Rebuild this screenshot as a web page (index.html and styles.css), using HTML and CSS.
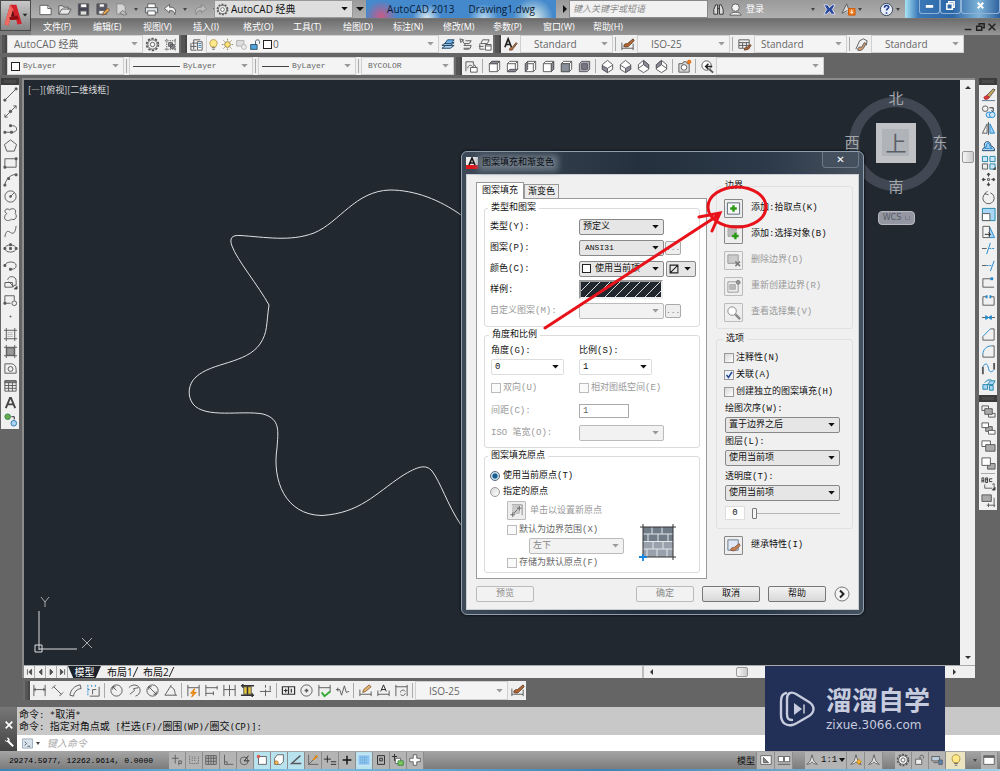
FILE: index.html
```html
<!DOCTYPE html>
<html lang="zh-CN">
<head>
<meta charset="utf-8">
<title>AutoCAD 2013 Drawing1.dwg</title>
<link rel="stylesheet" href="styles.css">
</head>
<body>
<svg class="defs" aria-hidden="true">
<symbol id="new" viewBox="0 0 16 16"><path d="M2 3.500h8.500l3.500 3.500v6.500H2z" fill="#fff"/><path d="M10.500 3.500V7H14"/></symbol>
<symbol id="open" viewBox="0 0 16 16"><path d="M2 13V4h4l1 1.500h5V8M2 13l3-5.500h10L12 13z" fill="#e8e8e8"/></symbol>
<symbol id="save" viewBox="0 0 16 16"><path d="M2.500 2h11v12h-11z" fill="#445"/><path d="M5 2h6.500v4H5z" fill="#fff"/><path d="M4.500 9.500h7V14h-7z" fill="#ddd"/></symbol>
<symbol id="saveas" viewBox="0 0 16 16"><path d="M2 2h10.500v11H2z" fill="#556"/><path d="M4.500 2h5.500v3.500H4.500z" fill="#fff"/><path d="M4 9h6v4H4z" fill="#eee"/><path d="M8 14l1-3 4.500-4.500 2 2L11 13z" fill="#e2aa4c" stroke="#754"/></symbol>
<symbol id="plot" viewBox="0 0 16 16"><path d="M3 2h6l3 3v8H3z" fill="#d5d5d5" stroke="#888"/><path d="M6 12l3-3 5 4-3 1z" fill="#bbb" stroke="#777"/></symbol>
<symbol id="print" viewBox="0 0 16 16"><path d="M4 6V2h8v4" fill="#fff"/><path d="M1.500 6h13v5.500h-13z" fill="#dfe3e8"/><path d="M4 9.500h8V14H4z" fill="#fff"/></symbol>
<symbol id="undo" viewBox="0 0 16 16"><path d="M7 2.500L1.500 7 7 11.500V9c4 0 5 1 5.500 4.500C15 8 12 5.500 7 5.500z" fill="#f4f4f4"/></symbol>
<symbol id="redo" viewBox="0 0 16 16"><path d="M9 2.500L14.500 7 9 11.500V9c-4 0-5 1-5.500 4.500C1 8 4 5.500 9 5.500z" fill="#bbb" stroke="#888"/></symbol>
<symbol id="gear" viewBox="0 0 16 16"><circle cx="8" cy="8" r="6.300" stroke-width="1.800" stroke-dasharray="2.500 1.450"/><circle cx="8" cy="8" r="5" fill="#eee"/><circle cx="8" cy="8" r="2.300" fill="#fff"/></symbol>
<symbol id="wsave" viewBox="0 0 16 16"><path d="M2 4h12M2 13h12M4 2v13M13 2v13" stroke-dasharray="1.500 1"/><path d="M6 6h4v4H6zM8 8h4v4H8z" fill="#99a"/></symbol>
<symbol id="layers" viewBox="0 0 16 16"><path d="M5 3h7M5 3v10M5 6.500h6M3 6.500h2M2 10h6M2 6.500V14h6" /><path d="M9 5h5v9H9z" fill="#fff"/><path d="M10 7h3M10 9h3M10 11h3" stroke="#37a"/></symbol>
<symbol id="lay1" viewBox="0 0 16 16"><path d="M1 12l4-3h9l-4 3zM1 9l4-3h9l-4 3z" fill="#a9cdec" stroke="#246"/><path d="M4 7l3-4h7l-3 4z" fill="#6db2e8" stroke="#246"/></symbol>
<symbol id="lay2" viewBox="0 0 16 16"><path d="M7 4h6l-2 3H6M5 9h8l-1 3H5M5 13h6"/><path d="M1 2l4 1-3 3zM3 3l4 6"/></symbol>
<symbol id="lay3" viewBox="0 0 16 16"><path d="M4 7l2-4h7l-2 4zM3 7v6h5M2 10h5"/><path d="M9 8h6v6H9z" fill="#fff"/><path d="M9 9.500h6"/></symbol>
<symbol id="bulb" viewBox="0 0 16 16"><path d="M5.500 11C2 7 3.500 2 8 2s6 5 2.500 9z" fill="#ffe98a" stroke="#a98b31"/><path d="M6 12h4M6.500 14h3"/></symbol>
<symbol id="sun" viewBox="0 0 16 16"><circle cx="8" cy="8" r="3.500" fill="#ffe57a" stroke="#87733b"/><path d="M8 1v2M8 13v2M1 8h2M13 8h2M3 3l1.500 1.500M11.500 11.500L13 13M13 3l-1.500 1.500M3 13l1.500-1.500" stroke="#87733b"/></symbol>
<symbol id="vpf" viewBox="0 0 16 16"><path d="M2 3h9v7H2z" fill="#ddd" stroke="#aaa"/><circle cx="11" cy="11" r="3" fill="#eee" stroke="#aaa"/></symbol>
<symbol id="lock" viewBox="0 0 16 16"><path d="M2 8h8v6H2z" fill="#4da3df" stroke="#245"/><path d="M8 8V4.500c0-3 5-3 5 0V7" stroke="#245"/></symbol>
<symbol id="tstyle" viewBox="0 0 16 16"><path d="M2 11L5.500 2 9 11M3 8h5" stroke="#222" stroke-width="1.800"/><path d="M7 14c0-3 2-3 3-3l4-5 1 1-4 5c0 2-2 2-4 2z" fill="#c0763d" stroke="#643"/></symbol>
<symbol id="dstyle" viewBox="0 0 16 16"><path d="M2 6v8M14 7v7M2 12h12"/><path d="M4 10c0-3 3-3 4-3l6-5 1 2-5 5c-1 2-4 2-6 1z" fill="#b5652f" stroke="#643"/></symbol>
<symbol id="tbstyle" viewBox="0 0 16 16"><path d="M2 3h11v9H2zM2 6h11M2 9h11M6 6v6M10 6v6"/><path d="M8 14c0-3 2-3 3-3l3-3 1 1-3 4z" fill="#b5652f" stroke="#643"/></symbol>
<symbol id="mlstyle" viewBox="0 0 16 16"><path d="M2 13L6 4l4-2 4 2-1 5"/><path d="M4 14c0-3 2-4 4-3l3-5 2 1-3 5c-1 2-4 3-6 2z" fill="#d89a6a"/></symbol>
<symbol id="vmgr" viewBox="0 0 16 16"><path d="M2 13V3h8v3M4 10c0-4 4-4 5-2"/><path d="M7 9h7v5H7z" fill="#fff"/><path d="M9 9l2-3 2 3"/></symbol>
<symbol id="cube" viewBox="0 0 16 16"><path d="M2.500 5h8.500v8.500H2.500zM2.500 5L5 2.500h8.500L11 5M13.500 2.500V11L11 13.500" fill="#fff"/></symbol>
<symbol id="cubeT" viewBox="0 0 16 16"><use href="#cube"/><path d="M2.500 5L5 2.500h8.500L11 5z" fill="#889"/></symbol>
<symbol id="cubeB" viewBox="0 0 16 16"><use href="#cube"/><path d="M2.500 13.500L5 11h8.500L11 13.500z" fill="#889"/></symbol>
<symbol id="cubeL" viewBox="0 0 16 16"><use href="#cube"/><path d="M2.500 5L5 2.500V11l-2.500 2.500z" fill="#889"/></symbol>
<symbol id="cubeR" viewBox="0 0 16 16"><use href="#cube"/><path d="M11 5l2.500-2.500V11L11 13.500z" fill="#889"/></symbol>
<symbol id="cubeF" viewBox="0 0 16 16"><use href="#cube"/><path d="M2.500 5H11v8.500H2.500z" fill="#89909c"/></symbol>
<symbol id="cubeK" viewBox="0 0 16 16"><path d="M2.500 5L5 2.500h8.500V11L11 13.500H2.500z" fill="#aab"/><path d="M5 5h6v6H5z" fill="#778"/></symbol>
<symbol id="iso" viewBox="0 0 16 16"><path d="M8 1.500l5.500 4.500v5L8 14.500 2.500 11V6z" fill="#fff"/></symbol>
<symbol id="isoA" viewBox="0 0 16 16"><use href="#iso"/><path d="M2.500 7L8 10v4.500L2.500 11z" fill="#889"/><path d="M8 10l5.500-3.500"/></symbol>
<symbol id="isoB" viewBox="0 0 16 16"><use href="#iso"/><path d="M13.500 7L8 10v4.500l5.500-3.500z" fill="#889"/><path d="M8 10L2.500 6.500"/></symbol>
<symbol id="isoC" viewBox="0 0 16 16"><use href="#iso"/><path d="M8 1.500l5.500 4.500v4L8 6z" fill="#889"/><path d="M8 6l-5.500 4"/></symbol>
<symbol id="isoD" viewBox="0 0 16 16"><use href="#iso"/><path d="M8 1.500L2.500 6v4L8 6z" fill="#889"/><path d="M8 6l5.500 4"/></symbol>
<symbol id="cam" viewBox="0 0 16 16"><path d="M2 5h4l1-2h3l1 2h2v9H2z" fill="#ddd"/><circle cx="7.500" cy="9" r="3" fill="#fff"/><circle cx="13" cy="3" r="1.800" fill="#f08020" stroke="#d60"/></symbol>
<symbol id="zprev" viewBox="0 0 16 16"><circle cx="7" cy="7" r="5" fill="#fff"/><path d="M10 11l4 3.500" stroke-width="2"/><path d="M13 8H6M9 5L6 8l3 3" stroke="#222" stroke-width="1.600"/></symbol>

<symbol id="line" viewBox="0 0 16 16"><path d="M2 14L14 2"/><path d="M1 13h2v2H1zM13 1h2v2h-2z" fill="#555"/></symbol>
<symbol id="xline" viewBox="0 0 16 16"><path d="M2 14L14 2M2 11v3h3M11 2h3v3"/><circle cx="8" cy="8" r="1.300" fill="#555"/></symbol>
<symbol id="pline" viewBox="0 0 16 16"><path d="M2 12h8c6 0 6-7 0-7H8"/><path d="M1 11h2v2H1zM7 4h2v2H7zM8 11h2v2H8z" fill="#555"/></symbol>
<symbol id="poly" viewBox="0 0 16 16"><path d="M8 2l6.500 5L12 14H4L1.500 7z"/></symbol>
<symbol id="rect" viewBox="0 0 16 16"><path d="M2 4h12v9H2z"/><path d="M1 12h2v2H1zM13 3h2v2h-2z" fill="#555"/></symbol>
<symbol id="arc" viewBox="0 0 16 16"><path d="M2 14C3 8 7 3 14 2.500"/><path d="M1 13h2v2H1zM5 6h2v2H5zM13 2h2v2h-2z" fill="#555"/></symbol>
<symbol id="circ" viewBox="0 0 16 16"><circle cx="8" cy="8" r="6"/><path d="M8 8l4-4"/><circle cx="8" cy="8" r="1" fill="#555"/></symbol>
<symbol id="cloud" viewBox="0 0 16 16"><path d="M4 7C0 5 3 0 7 3c4-3 8 0 6 4 3 3 0 8-4 6-3 3-9 1-7-3 0-1 1-2 2-3z"/></symbol>
<symbol id="spl" viewBox="0 0 16 16"><path d="M2 14c1-7 3-7 6-5s5 1 6-7"/></symbol>
<symbol id="ell" viewBox="0 0 16 16"><ellipse cx="8" cy="8" rx="6" ry="3.800"/><path d="M1 7h2v2H1zM13 7h2v2h-2zM7 3h2v2H7zM7 7h2v2H7z" fill="#555"/></symbol>
<symbol id="earc" viewBox="0 0 16 16"><path d="M2 8c1-5 12-5 12 0 0 3-2 4-5 4"/><path d="M1 7h2v2H1zM7 11h2v2H7z" fill="#555"/></symbol>
<symbol id="ins" viewBox="0 0 16 16"><path d="M5 5c1-5 9-4 9 1v5h-3M2 8h8v5H2z"/><path d="M6 7l6 6M12 15h3v-3z" fill="#222"/></symbol>
<symbol id="blk" viewBox="0 0 16 16"><path d="M2 12V4h10v5M2 12h6"/><circle cx="12" cy="12" r="2.500"/><path d="M1 11h2v2H1z" fill="#555"/></symbol>
<symbol id="pt" viewBox="0 0 16 16"><path d="M7.500 7.500h1v1h-1z" fill="#555"/></symbol>
<symbol id="hat" viewBox="0 0 16 16"><path d="M1 3.500h14M1 12.500h14M3.500 1v14M12.500 1v14"/><path d="M5 6h6M5 8h6M5 10h6" stroke="#888" stroke-dasharray="1 1"/></symbol>
<symbol id="grad" viewBox="0 0 16 16"><path d="M4 4h8v8H4z" fill="#999"/><path d="M1 3.500h14M1 12.500h14M3.500 1v14M12.500 1v14"/></symbol>
<symbol id="reg" viewBox="0 0 16 16"><path d="M2 3h7c3 0 5 3 5 6v4H2z"/><circle cx="8" cy="8.500" r="2.600"/></symbol>
<symbol id="tab" viewBox="0 0 16 16"><path d="M2 3h12v11H2zM2 8h12M2 11h12M6 5v9M10 5v9"/><path d="M2 3h12v2H2z" fill="#888"/></symbol>
<symbol id="mtext" viewBox="0 0 16 16"><path d="M3 14L7.500 3h1L13 14M5 10h6" stroke="#444" stroke-width="2"/></symbol>
<symbol id="addsel" viewBox="0 0 16 16"><circle cx="5" cy="5" r="3" fill="#6aaa4a" stroke="#385"/><circle cx="11.500" cy="12" r="3" fill="#a8d4f5" stroke="#37a"/><path d="M9 5h3v3" stroke="#222"/></symbol>

<symbol id="erase" viewBox="0 0 16 16"><path d="M1 14.500h14" stroke="#579"/><path d="M6 9l7-7 2 1-6 8z" fill="#caa85a"/><path d="M3 11l3-2 3 2-2 2H4z" fill="#d33" stroke="#a33"/></symbol>
<symbol id="copy" viewBox="0 0 16 16"><circle cx="4.500" cy="5" r="3"/><path d="M9 4h4v4M11 7l2 1.500" stroke="#222"/><circle cx="8.500" cy="11.500" r="3" fill="#cde6fa" stroke="#28c"/><circle cx="12" cy="11.500" r="3" fill="#cde6fa" stroke="#28c"/></symbol>
<symbol id="mir" viewBox="0 0 16 16"><path d="M6.500 3v10H1.500z"/><path d="M9.500 3v10h5z" fill="#9fd0f5" stroke="#28c"/><path d="M8 1v14"/></symbol>
<symbol id="off" viewBox="0 0 16 16"><path d="M1.500 13.500h13c0-3-2-5-4-5 0-6-7-6-7-1 0 1 1 2 1 2-2 1-3 2-3 4z" fill="#a9d6f7" stroke="#246"/><path d="M4 11h8c0-1-3 0-3-4 0-2-3-1-3 0 1 3-1 3-2 4z" stroke="#28c"/></symbol>
<symbol id="arr" viewBox="0 0 16 16"><path d="M1.500 9.500H7V15H1.500z"/><path d="M1.500 1.500H7V7H1.500zM9.500 1.500H15V7H9.500zM9.500 9.500H15V15H9.500z" fill="#cde6fa" stroke="#28a"/><path d="M13 15.500h2.500V13z" fill="#111"/></symbol>
<symbol id="move" viewBox="0 0 16 16"><path d="M8 1v4M8 11v4M1 8h4M11 8h4M6.500 3L8 1l1.500 2zM6.500 13L8 15l1.500-2zM3 6.500L1 8l2 1.500zM13 6.500L15 8l-2 1.500z" fill="#444" stroke="#444"/><path d="M7 7h2v2H7z"/></symbol>
<symbol id="rot" viewBox="0 0 16 16"><path d="M5 3.500A6 6 0 1 0 10 3M7 1L4 4l4 1"/></symbol>
<symbol id="scale" viewBox="0 0 16 16"><path d="M1.500 1.500H15V14.500H1.500z" fill="#a9d6f7" stroke="#28a"/><path d="M1.500 7h8v7.500h-8z" fill="#fff"/></symbol>
<symbol id="stre" viewBox="0 0 16 16"><path d="M9 2.500l5.500 12H9z" fill="#a9d6f7" stroke="#28c"/><path d="M2 2.500h7v12H2z" fill="#f4f4f4"/><path d="M4 11h6M8 9l2 2-2 2" stroke="#222"/></symbol>
<symbol id="trim" viewBox="0 0 16 16"><path d="M1 8h5" /><path d="M9 8h6" stroke="#28c" stroke-dasharray="2 1"/><path d="M10 2L6 14" stroke="#28c"/></symbol>
<symbol id="ext" viewBox="0 0 16 16"><path d="M1 8h5"/><path d="M6 8h5" stroke="#28c" stroke-dasharray="2 1"/><path d="M14 3l-4 11" stroke="#28c"/></symbol>
<symbol id="brk1" viewBox="0 0 16 16"><path d="M11 4H2v9h12"/><path d="M10 4h3" stroke="#28c" stroke-width="3"/></symbol>
<symbol id="brk" viewBox="0 0 16 16"><path d="M6 4H2v9h12V4h-4"/><path d="M5 4h2M9 4h2" stroke="#28c" stroke-width="3"/></symbol>
<symbol id="join" viewBox="0 0 16 16"><path d="M1 8h14"/><path d="M5 6l3 2-3 2zM11 6L8 8l3 2z" fill="#28c" stroke="#28c"/></symbol>
<symbol id="cham" viewBox="0 0 16 16"><path d="M2 10v4h12V2h-4"/><path d="M2 10l8-8" stroke="#28c"/></symbol>
<symbol id="fil" viewBox="0 0 16 16"><path d="M2 11v3h12V2h-3"/><path d="M2 11c0-5 4-9 9-9" stroke="#28c"/></symbol>
<symbol id="blend" viewBox="0 0 16 16"><path d="M2 14V6M14 2v7" stroke-width="2"/><path d="M2 6c3-5 5-3 6 2s4 4 6 1" stroke="#28c"/></symbol>
<symbol id="expl" viewBox="0 0 16 16"><path d="M2 7h5v5H2zM7 7l3-4h5l-2 4zM9 8h4v5H9zM4 5l3-3h4" fill="#a9d6f7" stroke="#28a"/></symbol>
<symbol id="ord1" viewBox="0 0 16 16"><path d="M1 2h7v5H1zM8 10h7v4H8z"/><path d="M4 5h8v6H4z" fill="#aaa"/></symbol>
<symbol id="ord2" viewBox="0 0 16 16"><path d="M5 6h7v5H5z" fill="#aaa"/><path d="M1 2h7v5H1zM8 10h7v4H8z" fill="#fff"/></symbol>
<symbol id="ord3" viewBox="0 0 16 16"><path d="M1 2h9v6H1z" fill="#fff"/><path d="M5 6h10v7H5z" fill="#aaa"/></symbol>
<symbol id="ord4" viewBox="0 0 16 16"><path d="M7 8h8v6H7z" fill="#aaa"/><path d="M1 2h9v8H1z" fill="#fff"/></symbol>
<symbol id="ord5" viewBox="0 0 16 16"><path d="M1 7V2h2v5M1 5h2M5 2h2v5H5zM5 4h2M12 3H9v3h3" stroke="#333"/><path d="M4 9v4h8M12 9l2-1v6"/><path d="M12 15h3v-3z" fill="#111"/></symbol>
<symbol id="ord6" viewBox="0 0 16 16"><path d="M1 2h10v7H1z" fill="#aaa"/><path d="M6 13h9M14 5v10M8 11v4"/></symbol>

<symbol id="dlin" viewBox="0 0 16 16"><path d="M2 2v12M14 2v12M2 7h12M4 5.500L2 7l2 1.500M12 5.500L14 7l-2 1.500"/></symbol>
<symbol id="dali" viewBox="0 0 16 16"><path d="M2 6l4-4M10 14l4-4M4 4l8 8"/></symbol>
<symbol id="darc" viewBox="0 0 16 16"><path d="M2 13C3 7 7 3 13 2M2 13l4 1M13 2l1 4M6 14c0-4 4-8 8-8"/></symbol>
<symbol id="dord" viewBox="0 0 16 16"><path d="M4 14h10V4M7 12V7h4" /><path d="M2 2v12M6 2v3M10 2v3M2 7h2" stroke="#28c" stroke-dasharray="2 1"/></symbol>
<symbol id="drad" viewBox="0 0 16 16"><circle cx="8" cy="8" r="6"/><path d="M8 8L4 4M4 7V4h3"/></symbol>
<symbol id="djog" viewBox="0 0 16 16"><path d="M2 5c4-5 12-3 12 3 0 3-2 5-5 6M3 12l5-4-1-2 5-1"/></symbol>
<symbol id="ddia" viewBox="0 0 16 16"><circle cx="8" cy="8" r="6"/><path d="M4 4l8 8M4 7V4h3M12 9v3H9"/></symbol>
<symbol id="dang" viewBox="0 0 16 16"><path d="M9 2L2 13h13M8 4c4 1 5 5 5 9"/></symbol>
<symbol id="dqik" viewBox="0 0 16 16"><path d="M2 2v12M14 2v12M2 5h12"/><path d="M9 6l-4 5h3l-2 4 5-5H8z" fill="#f7a02d" stroke="#e07b00"/></symbol>
<symbol id="dbas" viewBox="0 0 16 16"><path d="M2 2v12M2 5h12M14 3v4M2 11h8M10 9v4"/></symbol>
<symbol id="dcon" viewBox="0 0 16 16"><path d="M2 2v12M8 2v12M14 2v12M2 7h12"/></symbol>
<symbol id="dspa" viewBox="0 0 16 16"><path d="M4 4h8v8H4z" fill="#e5c53c"/><path d="M1 3h14M1 13h14M8 4v8M3 1v4M13 11v4" stroke="#333" stroke-width="1.600"/></symbol>
<symbol id="dbrk" viewBox="0 0 16 16"><path d="M8 2v3M8 7v7M2 9h12M13 3v5"/></symbol>
<symbol id="dtol" viewBox="0 0 16 16"><path d="M1.500 4h13v8h-13zM8 4v8M3 8h4M5 6v4M11 6v4" stroke="#333" stroke-width="1.300"/></symbol>
<symbol id="dcen" viewBox="0 0 16 16"><circle cx="8" cy="8" r="6"/><path d="M8 6v4M6 8h4" stroke-width="1.600"/></symbol>
<symbol id="dins" viewBox="0 0 16 16"><path d="M2 2v12M14 2v8M2 5h12"/><path d="M5 10l3 4 6-5" stroke="#3a3" stroke-width="2"/></symbol>
<symbol id="djgl" viewBox="0 0 16 16"><path d="M1 7h4M3 5v4M5 7l2 6 3-10 2 7 3-1"/></symbol>
<symbol id="dedt" viewBox="0 0 16 16"><path d="M2 7v7M14 9v5M2 12h12"/><path d="M5 10l1-3 6-5 2 2-6 5z" fill="#e5b36a" stroke="#864"/></symbol>
<symbol id="dted" viewBox="0 0 16 16"><path d="M2 8v6M14 8v6M2 12h12"/><path d="M5 9l3-7 3 7M6 7h4" stroke="#222"/></symbol>
<symbol id="dupd" viewBox="0 0 16 16"><path d="M2 2v12M14 2v12M2 4h12"/><path d="M7 10c0-3 4-3 5-1M12 11c-1 3-4 3-5 1"/></symbol>

<symbol id="s1" viewBox="0 0 16 16"><path d="M6 2v10M2 6h8M10 14v-5h3v3h-3"/></symbol>
<symbol id="s2" viewBox="0 0 16 16"><path d="M3 3v9h10V3M6 4v6M9 4v6" stroke-dasharray="1 1"/></symbol>
<symbol id="s3" viewBox="0 0 16 16"><path d="M2 3h12v10H2zM5 3v10M8 3v10M11 3v10M2 6h12M2 9.500h12"/></symbol>
<symbol id="s4" viewBox="0 0 16 16"><path d="M4 2v11h10M4 10h3v3"/></symbol>
<symbol id="s5" viewBox="0 0 16 16"><circle cx="7" cy="9" r="4.500"/><path d="M7 9l5-6M7 9h6" stroke="#222"/></symbol>
<symbol id="s6" viewBox="0 0 16 16"><path d="M4 4h9v9H4z" fill="#fff"/><circle cx="4" cy="4" r="1.500" fill="#e75" stroke="#c44"/></symbol>
<symbol id="s7" viewBox="0 0 16 16"><path d="M3 6l3-4h7v8l-3 3H3z" fill="#fff"/><circle cx="5" cy="11" r="2" fill="#fb6" stroke="#a72"/></symbol>
<symbol id="s8" viewBox="0 0 16 16"><path d="M13 3L3 12h11" stroke-width="1.600"/></symbol>
<symbol id="s9" viewBox="0 0 16 16"><path d="M3 2v11h11M3 13l6-6M10 3l3 3"/><path d="M8 8l5-5" stroke="#e80" stroke-width="2"/></symbol>
<symbol id="s10" viewBox="0 0 16 16"><path d="M5 3v8M1 7h8M9 10h6M9 13h6" stroke="#222"/></symbol>
<symbol id="s11" viewBox="0 0 16 16"><path d="M8 3v10M3 8h10" stroke="#111" stroke-width="1.600"/></symbol>
<symbol id="s12" viewBox="0 0 16 16"><path d="M1 2h14v12H1z" fill="#8cc4ee" stroke="#d8ecfa"/><path d="M4 5h8M4 8h8M4 11h8" stroke="#4a8fc6" stroke-dasharray="1 1"/></symbol>
<symbol id="s13" viewBox="0 0 16 16"><path d="M4 3h8v10H4zM6.500 6h3v3h-3z" stroke="#222"/></symbol>
<symbol id="s14" viewBox="0 0 16 16"><path d="M4 1v8M1 4h6" stroke="#222"/><path d="M5 6h6v6H5z" fill="#fff"/><path d="M8 9h6v5H8z" fill="#7fc65f" stroke="#384"/></symbol>
<symbol id="s15" viewBox="0 0 16 16"><path d="M6 2h4v4h4v4h-4v4H6v-4H2V6h4z" fill="#fff"/></symbol>
<symbol id="mdl" viewBox="0 0 16 16"><path d="M2 3h12v10H2z" fill="#fff"/><path d="M5 5v6h6z" fill="#888"/></symbol>
<symbol id="lays" viewBox="0 0 16 16"><path d="M1.500 4h6v6h-6zM8.500 4h6v6h-6z" fill="#fff"/><path d="M1 13h14"/></symbol>
<symbol id="ann" viewBox="0 0 16 16"><path d="M8 2l2 7 4 4-4-1-2-2-2 2-4 1 4-4z" fill="#eee"/></symbol>
<symbol id="annb" viewBox="0 0 16 16"><use href="#ann"/><path d="M11 7l3 3-3 3-2-3z" fill="#f5b23c" stroke="#c80"/></symbol>
<symbol id="lk2" viewBox="0 0 16 16"><path d="M3 7h7v6H3z" fill="#eee"/><path d="M8 7V4c0-2 4-2 4 0v2"/></symbol>
<symbol id="hw" viewBox="0 0 16 16"><path d="M2 4h9v5H2z" fill="#bcd"/><path d="M4 11h5M10 8h4v5h-4z" fill="#58b"/></symbol>
<symbol id="full" viewBox="0 0 16 16"><path d="M2 3h12v10H2z" fill="#fff"/><path d="M2 4.500h12" stroke-width="2"/></symbol>
<symbol id="bino" viewBox="0 0 16 16"><path d="M3 13V8l2-5h2v10zM9 13V3h2l2 5v5zM7 7h2" fill="#ddd" stroke="#333"/></symbol>
<symbol id="user" viewBox="0 0 16 16"><circle cx="8" cy="6" r="4" fill="#f4f4f4"/><path d="M2 14c0-4 12-4 12 0z" fill="#f4f4f4"/></symbol>
<symbol id="exch" viewBox="0 0 16 16"><path d="M2 3h4l2 3 3-3h3l-3 5 3 5h-4l-2-3-3 3H2l3-5z" fill="#27479e" stroke="#dde"/></symbol>
<symbol id="a360" viewBox="0 0 16 16"><path d="M1 12L6 2l3 8M1 12l6-3" fill="#ddd"/><path d="M8 7h7v7H8z" fill="#f07d20" stroke="#c50"/><path d="M11.500 8v4M10 10.500l1.500 1.500 1.500-1.500" stroke="#fff"/></symbol>
<symbol id="help" viewBox="0 0 16 16"><circle cx="8" cy="8" r="6.500" fill="#e9eef8" stroke="#345"/><path d="M5.800 6c0-3 4.500-3 4.500-.5 0 1.500-2.300 1.700-2.300 3.500M8 11v1.500" stroke="#1c3c96" stroke-width="1.700"/></symbol>
<symbol id="pick" viewBox="0 0 16 16"><path d="M1.500 2h13v12h-13z" fill="#f7f7f7" stroke="#567"/><path d="M8 4.500v7M4.500 8h7" stroke="#2a9a14" stroke-width="2.600"/></symbol>
<symbol id="selo" viewBox="0 0 16 16"><path d="M2 2h9v8H2z" fill="#bbb" stroke="#999" stroke-dasharray="2 1"/><path d="M10 6v7M6.500 9.500h7" stroke="#2a9a14" stroke-width="2.600"/></symbol>
<symbol id="remb" viewBox="0 0 16 16"><path d="M2 2h11v9H2z" fill="#ccc" stroke="#999"/><path d="M10 9l5 5M15 9l-5 5" stroke="#777" stroke-width="1.600"/></symbol>
<symbol id="recb" viewBox="0 0 16 16"><path d="M2 3h11v11H2z" stroke="#999"/><path d="M4 6h6v5H4z" fill="#bbb" stroke="#aaa"/><circle cx="13" cy="3.500" r="2" fill="#999" stroke="#777"/></symbol>
<symbol id="view" viewBox="0 0 16 16"><circle cx="6.500" cy="6.500" r="4.500" fill="#fff" stroke="#888"/><path d="M10 10l5 5" stroke="#888" stroke-width="2.500"/></symbol>
<symbol id="inh" viewBox="0 0 16 16"><path d="M2 2h11v11H2z" fill="#dfe8f4" stroke="#678"/><path d="M5 13c0-3 3-3 4-3l5-4 1 2-4 4c-1 2-4 2-6 1z" fill="#c8824c" stroke="#854"/></symbol>
<symbol id="orig" viewBox="0 0 16 16"><path d="M3 2h11v11" stroke="#888"/><path d="M4 4h7v7H4z" fill="#ccc" stroke="#bbb"/><path d="M11 3v5M8.500 5.500h5M4 10v5M1.500 12.500h5M5 11l4-4" stroke="#666"/></symbol>
</svg>

<header class="top">
  <button class="app" aria-label="应用程序菜单"><svg viewBox="0 0 32 32" aria-hidden="true"><path d="M4 26L10 4h7l6 21-5 1-1-5h-7l-2 6z" fill="#d3202a"/><path d="M10 4L4 26l4 1 6-17z" fill="#f06a62"/><path d="M9 18l9-2 2 4-10 1z" fill="#8d0d14"/><path d="M13 10l2 7h-4z" fill="#5f1013"/><path d="M24 14h5l-2.500 3z" fill="#222"/></svg></button>
  <div class="titlebar">
    <div class="qat">
      <button class="t" aria-label="新建"><svg><use href="#new"/></svg></button><button class="t" aria-label="打开"><svg><use href="#open"/></svg></button><button class="t" aria-label="保存"><svg><use href="#save"/></svg></button><button class="t" aria-label="另存为"><svg><use href="#saveas"/></svg></button><button class="t" aria-label="打印预览"><svg><use href="#plot"/></svg></button><i class="tri"></i><button class="t" aria-label="打印"><svg><use href="#print"/></svg></button><button class="t" aria-label="放弃"><svg><use href="#undo"/></svg></button><i class="tri"></i><button class="t" aria-label="重做"><svg><use href="#redo"/></svg></button><i class="tri"></i>
    </div>
    <div class="combo ws-top"><svg class="deco"><use href="#gear"/></svg><select aria-label="工作空间"><option>AutoCAD 经典</option></select></div>
    <button class="more" aria-label="自定义快速访问工具栏"><i class="tri big"></i></button>
    <h1 class="caption"><span>AutoCAD 2013</span><span>Drawing1.dwg</span></h1>
    <button class="more side-tri" aria-label="展开搜索"><i class="tri right"></i></button>
    <input class="search" type="search" aria-label="搜索" placeholder="键入关键字或短语">
    <div class="info">
      <button class="t" aria-label="查找"><svg><use href="#bino"/></svg></button><button class="login"><svg><use href="#user"/></svg>登录</button>
      <i class="tri push"></i><button class="t" aria-label="Exchange"><svg><use href="#exch"/></svg></button><button class="t" aria-label="连接"><svg><use href="#a360"/></svg></button><i class="tri"></i><button class="t helpb" aria-label="帮助"><svg><use href="#help"/></svg></button><i class="tri"></i>
    </div>
    <div class="win"><button aria-label="最小化"><svg viewBox="0 0 12 12"><path d="M2 7h8" stroke="#fff" stroke-width="3"/></svg></button><button aria-label="还原"><svg viewBox="0 0 12 12"><path d="M4 4V2h6v6H8M2 4h6v6H2z" fill="none" stroke="#fff" stroke-width="1.600"/></svg></button><button class="x" aria-label="关闭"><svg viewBox="0 0 12 12"><path d="M3 3l6 6M9 3L3 9" stroke="#fff" stroke-width="2.200"/></svg></button></div>
  </div>
  <nav class="menu">
    <a href="#">文件(F)</a><a href="#">编辑(E)</a><a href="#">视图(V)</a><a href="#">插入(I)</a><a href="#">格式(O)</a><a href="#">工具(T)</a><a href="#">绘图(D)</a><a href="#">标注(N)</a><a href="#">修改(M)</a><a href="#">参数(P)</a><a href="#">窗口(W)</a><a href="#">帮助(H)</a>
    <div class="docwin"><button aria-label="最小化文档"><svg viewBox="0 0 12 12"><path d="M2 9h8"/></svg></button><button aria-label="还原文档"><svg viewBox="0 0 12 12"><path d="M5 4V2h6v5H9M2 5h6v5H2z"/></svg></button><button aria-label="关闭文档"><svg viewBox="0 0 12 12"><path d="M2 2l8 8M10 2l-8 8"/></svg></button></div>
  </nav>
</header>

<div class="bars">
  <div class="bar">
    <i class="grip"></i><select class="w136 off" aria-label="工作空间"><option>AutoCAD 经典</option></select><button class="t" aria-label="工作空间设置"><svg><use href="#gear"/></svg></button><button class="t" aria-label="我的工作空间"><svg><use href="#wsave"/></svg></button>
    <i class="grip"></i><button class="t w19" aria-label="图层特性"><svg><use href="#layers"/></svg></button>
    <div class="combo layer"><span class="deco row"><svg><use href="#bulb"/></svg><svg><use href="#sun"/></svg><svg><use href="#vpf"/></svg><svg><use href="#lock"/></svg><i class="sw"></i></span><select class="off" aria-label="图层"><option>0</option></select></div>
    <button class="t" aria-label="置为当前"><svg><use href="#lay1"/></svg></button><button class="t" aria-label="上一个图层"><svg><use href="#lay2"/></svg></button><button class="t" aria-label="图层状态"><svg><use href="#lay3"/></svg></button>
    <i class="grip"></i><button class="t w19" aria-label="文字样式"><svg><use href="#tstyle"/></svg></button><select class="w92 off" aria-label="文字样式"><option>Standard</option></select><i class="sep"></i><button class="t w20" aria-label="标注样式"><svg><use href="#dstyle"/></svg></button><select class="w92 off" aria-label="标注样式"><option>ISO-25</option></select><i class="sep"></i><button class="t w20" aria-label="表格样式"><svg><use href="#tbstyle"/></svg></button><select class="w92 off near" aria-label="表格样式"><option>Standard</option></select><i class="sep"></i><button class="t w20" aria-label="多重引线样式"><svg><use href="#mlstyle"/></svg></button><select class="w92 off" aria-label="多重引线样式"><option>Standard</option></select>
  </div>
  <div class="bar two">
    <i class="grip"></i><div class="combo p1"><i class="deco sw"></i><select class="mono off" aria-label="颜色"><option>ByLayer</option></select></div><i class="sep"></i><div class="combo p2"><i class="deco ln"></i><select class="mono off" aria-label="线型"><option>ByLayer</option></select></div><i class="sep"></i><div class="combo p3"><i class="deco ln"></i><select class="mono off" aria-label="线宽"><option>ByLayer</option></select></div><i class="sep"></i><select class="w92 mono off near" aria-label="打印样式"><option>BYCOLOR</option></select>
    <i class="grip"></i><button class="t" aria-label="命名视图"><svg><use href="#vmgr"/></svg></button><i class="sep"></i><button class="t" aria-label="俯视"><svg><use href="#cubeT"/></svg></button><button class="t" aria-label="仰视"><svg><use href="#cubeB"/></svg></button><button class="t" aria-label="左视"><svg><use href="#cubeL"/></svg></button><button class="t" aria-label="右视"><svg><use href="#cubeR"/></svg></button><button class="t" aria-label="前视"><svg><use href="#cubeF"/></svg></button><button class="t" aria-label="后视"><svg><use href="#cubeK"/></svg></button><i class="sep"></i><button class="t" aria-label="西南等轴测"><svg><use href="#isoA"/></svg></button><button class="t" aria-label="东南等轴测"><svg><use href="#isoB"/></svg></button><button class="t" aria-label="东北等轴测"><svg><use href="#isoC"/></svg></button><button class="t" aria-label="西北等轴测"><svg><use href="#isoD"/></svg></button><i class="sep"></i><button class="t" aria-label="相机"><svg><use href="#cam"/></svg></button><i class="sep"></i><button class="t" aria-label="上一个视图"><svg><use href="#zprev"/></svg></button><select class="w108 off" aria-label="视图"><option></option></select>
  </div>
</div>

<main class="work">
  <aside class="side left">
    <div class="vbar draw"><i class="vgrip"></i>
      <button class="t" aria-label="直线"><svg><use href="#line"/></svg></button><button class="t" aria-label="构造线"><svg><use href="#xline"/></svg></button><button class="t" aria-label="多段线"><svg><use href="#pline"/></svg></button><button class="t" aria-label="多边形"><svg><use href="#poly"/></svg></button><button class="t" aria-label="矩形"><svg><use href="#rect"/></svg></button><button class="t" aria-label="圆弧"><svg><use href="#arc"/></svg></button><button class="t" aria-label="圆"><svg><use href="#circ"/></svg></button><button class="t" aria-label="修订云线"><svg><use href="#cloud"/></svg></button><button class="t" aria-label="样条曲线"><svg><use href="#spl"/></svg></button><button class="t" aria-label="椭圆"><svg><use href="#ell"/></svg></button><button class="t" aria-label="椭圆弧"><svg><use href="#earc"/></svg></button><button class="t" aria-label="插入块"><svg><use href="#ins"/></svg></button><button class="t" aria-label="创建块"><svg><use href="#blk"/></svg></button><button class="t" aria-label="点"><svg><use href="#pt"/></svg></button><button class="t" aria-label="图案填充"><svg><use href="#hat"/></svg></button><button class="t" aria-label="渐变色"><svg><use href="#grad"/></svg></button><button class="t" aria-label="面域"><svg><use href="#reg"/></svg></button><button class="t" aria-label="表格"><svg><use href="#tab"/></svg></button><button class="t" aria-label="多行文字"><svg><use href="#mtext"/></svg></button><button class="t" aria-label="添加选定对象"><svg><use href="#addsel"/></svg></button>
    </div>
  </aside>

  <section class="center">
    <div class="view">
      <div class="canvas">
        <svg class="drawing" aria-hidden="true"><g transform="translate(-24 -80)"><path d="M461 215C440 200 415 190 390 190C355 191 340 222 314 233C290 242 265 237 240 235.500C232 235 229 238 232 246C237 260 258 285 269 305C266 325 268 332 260 344C246 364 212 362 196 377C188 384 187 396 193 404C205 419 242 410 263 414C281 419 278 432 277 448C272 480 285 515 322 515.500C360 513 375 494 402 476C418 466 426 464 432 471C441 483 447 504 461 525"/></g></svg>
        <p class="vlabel">[—][俯视][二维线框]</p>
        <svg class="ucs" viewBox="0 0 64 60" aria-hidden="true"><path d="M8 15v39M8 53h38M4 49h7v7H4z"/><path d="M10 1l4 5 4-5M14 6v5M51 42l10 10M61 42L51 52" stroke="#aaa"/></svg>
        <div class="cube">
          <svg viewBox="0 0 110 146"><circle cx="55" cy="63" r="42" fill="none" stroke="#414853" stroke-width="10"/><path d="M35 42h40v40H35z" fill="#c0c2c5"/><path d="M41 48h27v27H41z" fill="#b0b3b8"/><g class="dir"><text x="55" y="23">北</text><text x="11" y="67">西</text><text x="99" y="67">东</text><text x="55" y="111">南</text><text class="up" x="55" y="70">上</text></g></svg>
          <button class="wcs">WCS <i></i></button>
        </div>

        <section class="dialog" role="dialog" aria-labelledby="dt">
          <header><svg viewBox="0 0 12 12" aria-hidden="true"><path d="M0 0h12v12H0z" fill="#eee"/><path d="M0 8h12v4H0z" fill="#e0161b"/><path d="M3 8L6 1l3 7M4 6h4" fill="none" stroke="#111" stroke-width="1.600"/></svg><h2 id="dt">图案填充和渐变色</h2><button aria-label="关闭">✕</button></header>
          <form class="body">
            <div class="cols">
              <div class="lcol">
                <div class="tabs" role="tablist"><button type="button" role="tab" aria-selected="true">图案填充</button><button type="button" role="tab" aria-selected="false">渐变色</button></div>
                <div class="panel">
                  <fieldset class="g1"><legend>类型和图案</legend>
                    <div class="r"><label for="ty">类型(Y):</label><select id="ty"><option>预定义</option></select></div>
                    <div class="r"><label for="pa">图案(P):</label><select id="pa" class="in"><option>ANSI31</option></select><button type="button" class="dots">...</button></div>
                    <div class="r"><label for="co">颜色(C):</label><div class="combo"><i class="deco sw"></i><select id="co"><option>使用当前项</option></select></div><div class="combo bg"><svg class="deco" viewBox="0 0 9 9"><path d="M1 1h7v7H1zM1 8l7-7" fill="none" stroke="#222"/></svg><select aria-label="背景色"><option></option></select></div></div>
                    <div class="r"><span class="lb">样例:</span><svg class="sample" viewBox="0 0 80 15" preserveAspectRatio="xMidYMid slice"><path d="M0 0h80v15H0z" fill="#20272f"/><path d="M-6 15L9 0M4 15L19 0M14 15L29 0M24 15L39 0M34 15L49 0M44 15L59 0M54 15L69 0M64 15L79 0M74 15L89 0" stroke="#ddd" stroke-width="1"/></svg></div>
                    <div class="r dis"><label for="cu">自定义图案(M):</label><select id="cu" disabled><option></option></select><button type="button" class="dots" disabled>...</button></div>
                  </fieldset>
                  <fieldset class="g2"><legend>角度和比例</legend>
                    <label for="an">角度(G):</label><label for="sc">比例(S):</label>
                    <select id="an" class="flat"><option>0</option></select><select id="sc" class="flat"><option>1</option></select>
                    <label class="ck dis"><input type="checkbox" disabled>双向(U)</label><label class="ck dis"><input type="checkbox" disabled>相对图纸空间(E)</label>
                    <label class="dis" for="sp">间距(C):</label><input id="sp" class="num" type="text" value="1" disabled>
                    <label class="dis" for="pw">ISO 笔宽(O):</label><select id="pw" class="pen" disabled><option></option></select>
                  </fieldset>
                  <fieldset class="g3"><legend>图案填充原点</legend>
                    <label class="ck"><input type="radio" name="o" checked>使用当前原点(T)</label>
                    <label class="ck"><input type="radio" name="o">指定的原点</label>
                    <div class="org dis">
                      <div class="ol">
                        <div class="pk"><button type="button" class="sq" id="np" disabled><svg><use href="#orig"/></svg></button><label for="np">单击以设置新原点</label></div>
                        <label class="ck"><input type="checkbox" disabled>默认为边界范围(X)</label>
                        <select aria-label="边界位置" disabled><option>左下</option></select>
                        <label class="ck"><input type="checkbox" disabled>存储为默认原点(F)</label>
                      </div>
                      <svg class="brick" viewBox="0 0 38 38" aria-hidden="true"><path d="M4 4h30v30H4z" fill="#99a2ac"/><path d="M4 4h30v14H4z" fill="#707d89"/><path d="M4 11h30M4 18.500h30M4 26h30M13 4v7M23 4v7M9 11v7M19 11v7M29 11v7M14 18v8M24 18v8M8 26v8M18 26v8M28 26v8" stroke="#e3e6e9"/><path d="M1 4h36M34 1v36M4 1v33M4 34h33" fill="none" stroke="#333"/><path d="M4 31v7M0 34h8" stroke="#1785e0" stroke-width="1.800"/></svg>
                    </div>
                  </fieldset>
                </div>
              </div>
              <div class="rcol">
                <fieldset class="g4"><legend>边界</legend>
                  <div class="pk"><button type="button" class="sq" id="b1"><svg><use href="#pick"/></svg></button><label for="b1">添加:拾取点(K)</label></div>
                  <div class="pk"><button type="button" class="sq" id="b2"><svg><use href="#selo"/></svg></button><label for="b2">添加:选择对象(B)</label></div>
                  <div class="pk dis"><button type="button" class="sq" id="b3" disabled><svg><use href="#remb"/></svg></button><label for="b3">删除边界(D)</label></div>
                  <div class="pk dis"><button type="button" class="sq" id="b4" disabled><svg><use href="#recb"/></svg></button><label for="b4">重新创建边界(R)</label></div>
                  <div class="pk dis"><button type="button" class="sq" id="b5" disabled><svg><use href="#view"/></svg></button><label for="b5">查看选择集(V)</label></div>
                </fieldset>
                <fieldset class="g5"><legend>选项</legend>
                  <label class="ck"><input type="checkbox">注释性(N)</label>
                  <label class="ck"><input type="checkbox" checked>关联(A)</label>
                  <label class="ck"><input type="checkbox">创建独立的图案填充(H)</label>
                  <label for="dr">绘图次序(W):</label><select id="dr"><option>置于边界之后</option></select>
                  <label for="la">图层(L):</label><select id="la"><option>使用当前项</option></select>
                  <label for="tr">透明度(T):</label><select id="tr"><option>使用当前项</option></select>
                  <div class="sl"><input type="text" value="0" aria-label="透明度值"><input type="range" value="0" aria-label="透明度"></div>
                </fieldset>
                <div class="pk inh"><button type="button" class="sq" id="b6"><svg><use href="#inh"/></svg></button><label for="b6">继承特性(I)</label></div>
              </div>
            </div>
            <footer><button type="button" disabled>预览</button><span class="fill"></span><button type="button" disabled>确定</button><button type="button">取消</button><button type="button">帮助</button><button type="button" class="round" aria-label="更多选项"><svg viewBox="0 0 16 16"><circle cx="8" cy="8" r="7" fill="#f3f3f3" stroke="#777"/><path d="M6 4.500L9.500 8 6 11.500" fill="none" stroke="#222" stroke-width="2"/></svg></button></footer>
          </form>
          <svg class="mark" viewBox="0 0 240 160" aria-hidden="true"><ellipse cx="202" cy="30" rx="29" ry="20"/><path d="M10 151L182 39M164 40l21-4-8 18"/></svg>
        </section>
      </div>
      <div class="vscroll" aria-hidden="true"><i class="ua"></i><i class="th"></i><i class="da"></i></div>
    </div>
    <div class="sheets">
      <button class="nv" aria-label="第一个"><svg viewBox="0 0 10 10"><path d="M2 1v8M8 1L4 5l4 4z"/></svg></button><button class="nv" aria-label="上一个"><svg viewBox="0 0 10 10"><path d="M7 1L3 5l4 4z"/></svg></button><button class="nv" aria-label="下一个"><svg viewBox="0 0 10 10"><path d="M3 1l4 4-4 4z"/></svg></button><button class="nv" aria-label="最后一个"><svg viewBox="0 0 10 10"><path d="M8 1v8M2 1l4 4-4 4z"/></svg></button>
      <button class="sheet on">模型</button><button class="sheet">布局1</button><button class="sheet">布局2</button>
      <div class="hscroll" aria-hidden="true"><i class="la"></i><i class="th"></i><i class="ra"></i></div>
    </div>
  </section>

  <aside class="side right">
    <div class="vbar modify"><i class="vgrip"></i>
      <button class="t" aria-label="删除"><svg><use href="#erase"/></svg></button><button class="t" aria-label="复制"><svg><use href="#copy"/></svg></button><button class="t" aria-label="镜像"><svg><use href="#mir"/></svg></button><button class="t" aria-label="偏移"><svg><use href="#off"/></svg></button><button class="t" aria-label="阵列"><svg><use href="#arr"/></svg></button><button class="t" aria-label="移动"><svg><use href="#move"/></svg></button><button class="t" aria-label="旋转"><svg><use href="#rot"/></svg></button><button class="t" aria-label="缩放"><svg><use href="#scale"/></svg></button><button class="t" aria-label="拉伸"><svg><use href="#stre"/></svg></button><button class="t" aria-label="修剪"><svg><use href="#trim"/></svg></button><button class="t" aria-label="延伸"><svg><use href="#ext"/></svg></button><button class="t" aria-label="打断于点"><svg><use href="#brk1"/></svg></button><button class="t" aria-label="打断"><svg><use href="#brk"/></svg></button><button class="t" aria-label="合并"><svg><use href="#join"/></svg></button><button class="t" aria-label="倒角"><svg><use href="#cham"/></svg></button><button class="t" aria-label="圆角"><svg><use href="#fil"/></svg></button><button class="t" aria-label="光顺曲线"><svg><use href="#blend"/></svg></button><button class="t" aria-label="分解"><svg><use href="#expl"/></svg></button>
    </div>
    <div class="vbar order"><i class="vgrip"></i>
      <button class="t" aria-label="前置"><svg><use href="#ord1"/></svg></button><button class="t" aria-label="后置"><svg><use href="#ord2"/></svg></button><button class="t" aria-label="置于对象之上"><svg><use href="#ord3"/></svg></button><button class="t" aria-label="置于对象之下"><svg><use href="#ord4"/></svg></button><i class="hsep"></i><button class="t" aria-label="注释前置"><svg><use href="#ord5"/></svg></button><button class="t" aria-label="填充后置"><svg><use href="#ord6"/></svg></button>
    </div>
  </aside>
</main>

<div class="dimrow"><div class="bar">
  <i class="grip"></i><button class="t" aria-label="线性"><svg><use href="#dlin"/></svg></button><button class="t" aria-label="对齐"><svg><use href="#dali"/></svg></button><button class="t" aria-label="弧长"><svg><use href="#darc"/></svg></button><button class="t" aria-label="坐标"><svg><use href="#dord"/></svg></button><i class="sep"></i><button class="t" aria-label="半径"><svg><use href="#drad"/></svg></button><button class="t" aria-label="折弯"><svg><use href="#djog"/></svg></button><button class="t" aria-label="直径"><svg><use href="#ddia"/></svg></button><button class="t" aria-label="角度"><svg><use href="#dang"/></svg></button><i class="sep"></i><button class="t" aria-label="快速标注"><svg><use href="#dqik"/></svg></button><button class="t" aria-label="基线"><svg><use href="#dbas"/></svg></button><button class="t" aria-label="连续"><svg><use href="#dcon"/></svg></button><button class="t" aria-label="等距标注"><svg><use href="#dspa"/></svg></button><button class="t" aria-label="折断标注"><svg><use href="#dbrk"/></svg></button><i class="sep"></i><button class="t" aria-label="公差"><svg><use href="#dtol"/></svg></button><button class="t" aria-label="圆心标记"><svg><use href="#dcen"/></svg></button><button class="t" aria-label="检验"><svg><use href="#dins"/></svg></button><button class="t" aria-label="折弯线性"><svg><use href="#djgl"/></svg></button><i class="sep"></i><button class="t" aria-label="编辑标注"><svg><use href="#dedt"/></svg></button><button class="t" aria-label="编辑标注文字"><svg><use href="#dted"/></svg></button><button class="t" aria-label="标注更新"><svg><use href="#dupd"/></svg></button><i class="sep"></i><select class="w92 off" aria-label="标注样式控制"><option>ISO-25</option></select><button class="t" aria-label="标注样式"><svg><use href="#dstyle"/></svg></button>
</div></div>

<section class="cmd">
  <div class="cmdside"><button aria-label="关闭命令行"><svg viewBox="0 0 12 12"><path d="M2 2l8 8M10 2l-8 8" stroke="#fff" stroke-width="2"/></svg></button><button aria-label="自定义"><svg viewBox="0 0 12 12"><path d="M5 5l6 6" stroke="#fff" stroke-width="2.500"/><path d="M1 3l2 2 2-2-2-2c3-1 5 2 3 4s-5 1-5-2z" fill="#fff"/></svg></button></div>
  <div class="cmdmain">
    <div class="hist"><p>命令<span>: *</span>取消<span>*</span></p><p>命令<span>: </span>指定对角点或<span> [</span>栏选<span>(F)/</span>圈围<span>(WP)/</span>圈交<span>(CP)]:</span></p></div>
    <div class="line"><svg viewBox="0 0 12 12" aria-hidden="true"><path d="M.5 1h11v10H.5z" fill="#d9e2ea" stroke="#9ab"/><path d="M3 4l2 2-2 2M6 9h3" fill="none" stroke="#456"/></svg><i class="tri"></i><input type="text" aria-label="命令" placeholder="键入命令"></div>
  </div>
</section>

<footer class="status">
  <output>29274.5977, 12262.9614, 0.0000</output>
  <div class="sg"><button aria-label="推断约束"><svg><use href="#s1"/></svg></button><button aria-label="捕捉模式"><svg><use href="#s2"/></svg></button><button aria-label="栅格显示"><svg><use href="#s3"/></svg></button><button aria-label="正交模式"><svg><use href="#s4"/></svg></button><button aria-label="极轴追踪"><svg><use href="#s5"/></svg></button><button class="on" aria-label="对象捕捉"><svg><use href="#s6"/></svg></button><button class="on" aria-label="三维对象捕捉"><svg><use href="#s7"/></svg></button><button class="on" aria-label="对象捕捉追踪"><svg><use href="#s8"/></svg></button><button aria-label="动态UCS"><svg><use href="#s9"/></svg></button><button aria-label="动态输入"><svg><use href="#s10"/></svg></button><button aria-label="线宽"><svg><use href="#s11"/></svg></button><button class="on" aria-label="透明度"><svg><use href="#s12"/></svg></button><button aria-label="快捷特性"><svg><use href="#s13"/></svg></button><button aria-label="选择循环"><svg><use href="#s14"/></svg></button><button aria-label="注释监视器"><svg><use href="#s15"/></svg></button></div>
  <span class="fill"></span>
  <div class="sg r2"><button class="tx">模型</button><button aria-label="快速查看布局"><svg><use href="#mdl"/></svg></button><button aria-label="快速查看图形"><svg><use href="#lays"/></svg></button></div>
  <div class="sg"><button class="scalebtn"><svg><use href="#ann"/></svg>1:1 <i class="tri big"></i></button><button aria-label="注释可见性"><svg><use href="#annb"/></svg></button><button aria-label="自动缩放"><svg><use href="#ann"/></svg></button></div>
  <div class="sg"><button aria-label="切换工作空间"><svg><use href="#gear"/></svg></button><button aria-label="锁定"><svg><use href="#lk2"/></svg></button><button aria-label="硬件加速"><svg><use href="#hw"/></svg></button><button class="iso" aria-label="隔离对象"><svg><use href="#bulb"/></svg></button></div><i class="tri"></i><div class="sg last"><button aria-label="全屏显示"><svg><use href="#full"/></svg></button></div>
</footer>
<div class="taskedge"></div>

<div class="brand"><svg viewBox="0 0 36 38" aria-hidden="true"><path d="M7 3C3 4 2 7 2 11v14c0 8 5 11 11 10"/><path d="M13 30c-4 0-5-2-5-6V9c0-6 4-8 9-5l13 8c6 4 6 10 0 14l-12 7c-2 1-3 2-5 2"/><path d="M15 13l8 6-8 6z" fill="#c6ccdd" stroke="none"/><path d="M25 15v8" stroke-width="1.500"/></svg><div><strong>溜溜自学</strong><span>zixue.3066.com</span></div></div>
</body>
</html>
```
FILE: styles.css
```css
* { box-sizing: border-box; }
body {
  margin: 0; min-height: 100vh; display: flex; flex-direction: column;
  position: relative; overflow: hidden; background: #656565; color: #111;
  font: 10px/12px "Open Sans", "Noto Sans CJK SC", sans-serif;
}
button, input, select { font: inherit; color: inherit; margin: 0; padding: 0; }
button { border: 0; background: none; }
a { color: inherit; text-decoration: none; }
p, h1, h2 { margin: 0; font: inherit; }
i { font-style: normal; display: block; }
.defs { position: absolute; width: 0; height: 0; }
.fill { flex: 1; }

select {
  appearance: none; border: 1px solid #d0d0d0; border-radius: 0; background: #f4f4f4; min-width: 0;
  background-image: url("data:image/svg+xml,%3Csvg xmlns='http://www.w3.org/2000/svg' viewBox='0 0 8 5'%3E%3Cpath d='M0 0h8L4 4.500z' fill='%23111'/%3E%3C/svg%3E");
  background-repeat: no-repeat; background-size: 7px 4px; background-position: right 4px center;
}
select.off, select:disabled {
  background-image: url("data:image/svg+xml,%3Csvg xmlns='http://www.w3.org/2000/svg' viewBox='0 0 8 5'%3E%3Cpath d='M0 0h8L4 4.500z' fill='%23999'/%3E%3C/svg%3E");
}
select:disabled { opacity: 1; }
select.off { color: #666; }
.combo { display: grid; align-items: center; }
.combo > * { grid-area: 1 / 1; }
.combo select { width: 100%; height: 100%; }
.deco { z-index: 1; pointer-events: none; margin-left: 4px; }
.sw { width: 9px; height: 9px; border: 1px solid #222; background: #fff; }
.ln { height: 1px; background: #444; }

.tri { border: 2px solid transparent; border-top: 3px solid #444; border-bottom: 0; width: 4px; flex: none; }
.tri.big { border-width: 4px; border-top-color: #111; border-bottom: 0; width: 8px; }
.tri.right { border: 4px solid transparent; border-left-color: #111; border-right: 0; width: 4px; }

.t { flex: none; width: 18px; height: 16px; display: grid; place-items: center; }
.t svg, .sq svg, .sg svg, .login svg, .combo svg.deco, .row svg {
  width: 15px; height: 15px; fill: none; stroke: #5a5a5a; stroke-width: 1; display: block;
}

/* title and menu */
.top { display: grid; grid-template-columns: 31px 1fr; grid-template-rows: 19px 16px; background: #7c7c7c; }
.app { grid-row: 1 / 3; margin-bottom: 4px; background: linear-gradient(#c8c8c8, #858585); border: 1px solid #4a4a4a; }
.app svg { width: 29px; height: 29px; display: block; }
.titlebar { display: flex; align-items: stretch; background: linear-gradient(#9a9a9a, #b0b0b0); border-bottom: 1px solid #777; min-width: 0; }
.qat { display: flex; align-items: center; width: 183px; padding-left: 5px; gap: 1px; }
.qat .t { width: 18px; }
.qat .tri { margin: 0 3px; }
.ws-top { width: 139px; }
.ws-top select { padding-left: 16px; background-color: #dedede; border-color: #999; color: #111; }
.ws-top svg.deco { margin-left: 2px; width: 13px; height: 13px; }
.more { width: 13px; display: grid; place-items: center; }
.more.side-tri { padding-left: 4px; }
.caption {
  flex: 1; display: flex; align-items: center; justify-content: center; gap: 14px; color: #0b1a33; white-space: nowrap; overflow: hidden;
  background: radial-gradient(circle at 8% 90%, #c85a86 0, transparent 9%), radial-gradient(circle at 32% 100%, #dceaf2 0, transparent 11%), radial-gradient(circle at 88% 100%, #e5f3ea 0, transparent 12%), radial-gradient(circle at 62% 100%, #b5d7f0 0, transparent 12%), #4489cc;
}
.search { width: 139px; border: 1px solid #888; background: #f1f1f1; padding: 0 3px; font-style: italic; font-size: 9px; }
.search::placeholder { color: #888; opacity: 1; }
.info { display: flex; align-items: center; width: 197px; padding: 0 5px 0 1px; gap: 1px; }
.push { margin-left: auto; margin-right: 4px; }
.helpb { margin-left: 14px; }
.login { display: flex; align-items: center; gap: 3px; color: #fff; font-size: 9px; }
.win { width: 95px; display: flex; padding-left: 14px; background: linear-gradient(90deg, #a8e4f5, #3a78b8 14%, #2c66a6 50%, #7fb4d8 78%, #2d5f9c); }
.win button { flex: 1; display: grid; place-items: start center; border: 1px solid #8fb3d6; border-top: 0; border-radius: 0 0 3px 3px; height: 14px; }
.win .x { flex: 2; }
.win svg { width: 11px; height: 11px; }
.menu { display: flex; align-items: center; padding-left: 12px; color: #fff; font-size: 9px; background: linear-gradient(#6d6d6d, #979797); min-width: 0; }
.menu a { flex: 0 0 50px; }
.docwin { margin-left: auto; display: flex; gap: 2px; padding-right: 3px; }
.docwin svg { width: 10px; height: 10px; display: block; fill: none; stroke: #222; stroke-width: 1.8; }

/* toolbars */
.bars { display: grid; gap: 4px; padding: 0 0 3px; }
.bar { display: flex; width: fit-content; height: 18px; align-items: stretch; background: #f0f0f0; }
.bar .t { height: 18px; }
.grip { flex: none; width: 8px; background: #555; border-right: 2px solid #484848; border-left: 2px solid #6c6c6c; }
.grip:first-child { width: 7px; }
.sep { flex: none; width: 1px; margin: 2px 1px 2px 2px; background: #aaa; }
.two .sep { margin: 2px; }
.bar select { padding-left: 13px; }
.bar .w92, .bar .w92.off { padding-left: 13px; width: 93px; }
.bar select.w92.near { padding-left: 6px; }
.bar .w136 { width: 136px; padding-left: 6px; }
.bar .w108 { width: 108px; }
.bar .w19 { width: 19px; }
.bar .w20 { width: 20px; }
.layer { width: 233px; }
.layer .row { display: flex; align-items: center; margin-left: 1px; gap: 1px; }
.layer .row svg { width: 13px; height: 13px; }
.bar .layer select { padding-left: 66px; }
.mono { font-family: "Liberation Mono", monospace; font-size: 8px; }
.p1 { width: 117px; }
.p2 { width: 124px; }
.p3 { width: 98px; }
.bar .p1 select { padding-left: 15px; }
.bar .p2 select { padding-left: 53px; }
.bar .p3 select { padding-left: 33px; }
.p2 .ln { width: 47px; }
.p3 .ln { width: 27px; }

/* work area */
.work { flex: 1; display: grid; grid-template-columns: 22px 1fr 25px; }
.side { padding: 0 3px 0 1px; }
.side.right { padding: 0 3px 0 4px; }
.vbar { display: flex; flex-direction: column; align-items: center; justify-content: space-between; background: #f0f0f0; width: 18px; padding-bottom: 1px; }
.vgrip { width: 18px; height: 7px; flex: none; background: #4a4a4a; border: 2px solid #3c3c3c; border-width: 2px 3px; }
.draw { height: 351px; }
.modify { height: 317px; }
.order { height: 115px; }
.hsep { width: 14px; height: 1px; background: #aaa; }
.center { display: flex; flex-direction: column; min-width: 0; border-top: 2px solid #8c8c8c; border-left: 2px solid #8c8c8c; }
.view { flex: 1; display: flex; }
.canvas { flex: 1; position: relative; background: #212830; min-width: 0; }
.drawing { position: absolute; inset: 0; width: 100%; height: 100%; fill: none; stroke: #dfe2e5; stroke-width: 1; }
.vlabel { position: absolute; left: 4px; top: 4px; color: #ddd; font-family: "Noto Sans CJK SC", sans-serif; font-size: 9px; }
.ucs { position: absolute; left: 7px; bottom: 9px; width: 64px; height: 60px; fill: none; stroke: #ddd; }
.cube { position: absolute; right: 9px; top: 1px; width: 110px; }
.cube svg { display: block; width: 110px; height: 146px; }
.dir { fill: #a3a6aa; font: 15px "Noto Sans CJK SC", sans-serif; text-anchor: middle; }
.dir .up { fill: #59606a; font-size: 21px; }
.wcs { position: absolute; left: 37px; top: 130px; width: 37px; height: 14px; border-radius: 4px; border: 1px solid #b8bac0; background: #9497a1; color: #555a66; font: 8px/10px "DejaVu Sans", sans-serif; display: flex; align-items: center; justify-content: center; gap: 4px; }
.wcs i { width: 5px; height: 4px; border: 1px solid #7d818d; border-top: 0; }
.vscroll { width: 15px; background: #f0f0f0; display: flex; flex-direction: column; align-items: center; padding: 6px 0; }
.vscroll .th, .hscroll .th { width: 12px; height: 12px; border: 1px solid #999; border-radius: 2px; background: linear-gradient(90deg, #f5f5f5, #ccc); }
.ua, .da { border: 3px solid transparent; }
.ua { border-bottom-color: #333; border-top: 0; }
.da { border-top-color: #333; border-bottom: 0; margin-top: auto; }
.vscroll .th { margin-top: 62px; }
.sheets { height: 13px; display: flex; align-items: stretch; background: #f0f0f0; border-top: 1px solid #aaa; font-size: 10px; line-height: 11px; }
.nv { width: 11px; border-right: 1px solid #aaa; display: grid; place-items: center; }
.nv svg { width: 7px; height: 8px; stroke: #333; fill: #555; }
.sheet { padding: 0 4px; height: 12px; position: relative; margin-right: 3px; width: 33px; white-space: nowrap; }
.sheet.on { background: #1b222a; color: #fff; clip-path: polygon(0 0, 100% 0, 84% 100%, 16% 100%); margin-right: 2px; }
.sheet:not(.on)::after { content: ""; position: absolute; right: 0; top: 1px; bottom: 1px; width: 1px; background: #222; transform: skewX(-25deg); }
.hscroll { margin-left: auto; width: 333px; display: flex; align-items: center; border-left: 2px solid #bbb; padding: 0 19px 0 6px; }
.hscroll .th { margin-left: 83px; height: 10px; }
.la, .ra { border: 3px solid transparent; }
.la { border-right-color: #333; border-left: 0; }
.ra { border-left-color: #333; border-right: 0; margin-left: auto; }

/* dialog */
.dialog {
  position: absolute; left: 437px; top: 71px; width: 403px; border: 1px solid #8fa0b0; border-radius: 6px; padding: 0 4px 4px;
  background: linear-gradient(90deg, #3d4957, #24303d 45%, #2c3948 75%, #46515f);
  font: 9px/12px "Liberation Mono", "Noto Sans CJK SC", monospace; box-shadow: 0 0 3px #000;
}
.dialog > header { display: flex; align-items: center; height: 22px; gap: 4px; }
.dialog > header svg { width: 12px; height: 12px; }
.dialog h2 { color: #0a0d11; background: #6a7682; box-shadow: 0 0 6px 4px #6a7682; line-height: 8px; font-size: 9px; }
.dialog > header button { margin-left: auto; align-self: start; width: 37px; height: 16px; border: 1px solid #6c7987; border-top: 0; border-radius: 0 0 4px 4px; color: #fff; background: #44505e; font: bold 10px/14px "DejaVu Sans", sans-serif; }
.body { background: #f0f0f0; border: 1px solid #c8ced4; padding: 7px 6px 7px 9px; color: #111; }
.cols { display: flex; gap: 9px; }
.lcol { width: 232px; }
.rcol { width: 137px; }
.tabs { display: flex; align-items: end; height: 16px; }
.tabs button { border: 1px solid #999; border-bottom: 0; height: 14px; width: 35px; background: #ececec; white-space: nowrap; text-align: center; }
.tabs button[aria-selected="true"] { width: 48px; height: 17px; background: #fff; margin-bottom: -1px; padding-bottom: 1px; z-index: 1; }
.panel { background: #fff; border: 1px solid #999; padding: 3px 6px 5px 7px; }
fieldset { border: 1px solid #dcdcdc; border-radius: 3px; margin: 0; min-width: 0; }
legend { padding: 0 3px; margin-left: -2px; height: 12px; }
.dialog select { height: 16px; padding-left: 3px; border: 1px solid #888; border-radius: 2px; background-color: #e6e6e6; width: 85px; white-space: nowrap; overflow: hidden; }
.dialog select:disabled { border-color: #bbb; background-color: #f2f2f2; color: #888; }
.dis { color: #999; }
.r { display: flex; align-items: center; height: 21px; }
.r > label, .lb { width: 89px; flex: none; }
.g1 { padding: 2px 3px 5px 5px; }
.g1 .combo { width: 85px; height: 16px; }
.g1 .combo.bg { width: 30px; margin-left: 2px; }
.g1 .combo .deco { margin-left: 3px; }
.g1 .combo svg.deco { width: 10px; height: 10px; }
.g1 .combo select { width: 100%; }
.g1 #co { padding-left: 15px; }
.g1 .in { padding-left: 5px; font-size: 8px; }
.dots { width: 16px; height: 14px; border: 1px solid #aaa; border-radius: 2px; background: #eee; margin-left: 1px; font-size: 8px; line-height: 8px; color: #777; }
.sample { width: 84px; height: 19px; border: 2px solid #9a9a9a; border-right-color: #eee; border-bottom-color: #eee; }
.g2 { display: grid; grid-template-columns: 88px 1fr; grid-template-rows: 14px 18px 24px 22px 22px; align-items: center; padding: 3px 3px 3px 6px; margin-top: 2px; }
.dialog .flat { border-color: #ddd; background-color: #fff; width: 73px; }
.g2 .num { width: 50px; height: 14px; border: 1px solid #aaa; background: #fff; padding-left: 3px; color: #666; }
.ck { display: flex; align-items: center; gap: 2px; height: 17px; white-space: nowrap; }
input[type="checkbox"], input[type="radio"] { appearance: none; flex: none; width: 10px; height: 10px; border: 1px solid #999; background: linear-gradient(135deg, #d8d8d8, #fff); }
input[type="checkbox"]:disabled { border-color: #bbb; background: #fafafa; }
input[type="checkbox"]:checked { background: #eef3fa url("data:image/svg+xml,%3Csvg xmlns='http://www.w3.org/2000/svg' viewBox='0 0 8 8'%3E%3Cpath d='M1.500 4l2 2.500L7 1' fill='none' stroke='%23234a91' stroke-width='1.500'/%3E%3C/svg%3E"); }
input[type="radio"] { border-radius: 50%; }
input[type="radio"]:checked { background: radial-gradient(circle, #1c5c8c 0 2px, #9fd0ea 3px, #eee 4px); border-color: #567; }
.g3 { padding: 6px 3px 1px 5px; margin-top: 2px; }
.g3 > .ck { height: 16px; gap: 3px; }
.org { display: flex; gap: 14px; align-items: center; padding-left: 17px; }
.ol { display: flex; flex-direction: column; width: 118px; }
.ol > .ck { height: 17px; color: #666; }
.dialog .ol > select { margin-left: 22px; width: 95px; }
.pk { display: flex; align-items: center; gap: 8px; height: 26px; white-space: nowrap; }
.org .pk { height: 21px; gap: 4px; }
.sq { width: 19px; height: 19px; border: 1px solid #888; border-radius: 1px; background: #eee; display: grid; place-items: center; flex: none; }
.sq:disabled { border-color: #bbb; }
.brick { width: 38px; height: 38px; margin-top: 12px; flex: none; }
.rcol fieldset { border-color: #e0e0e0; }
.rcol .g4 { padding: 3px 3px 3px 7px; margin-top: -2px; }
.g5 { display: flex; flex-direction: column; padding: 4px 12px 8px 8px; margin-top: 4px; }
.g5 > label:not(.ck) { height: 17px; padding-top: 3px; }
.g5 > .ck { margin-left: -1px; }
.g5 label[for="tr"] { margin-top: 2px; }
.dialog .g5 select { width: 100%; }
.sl { display: flex; align-items: center; gap: 7px; margin-top: 5px; }
.sl input[type="text"] { width: 20px; height: 14px; border: 1px solid #ddd; background: #fff; text-align: center; }
.sl input[type="range"] { appearance: none; flex: 1; min-width: 0; height: 14px; background: linear-gradient(#b5b5b5, #b5b5b5) center / 100% 1px no-repeat; }
.sl input[type="range"]::-webkit-slider-thumb { appearance: none; width: 5px; height: 11px; border: 1px solid #777; border-radius: 1px; background: #f5f5f5; }
.inh { padding-left: 8px; margin-top: 3px; }
.body footer { display: flex; align-items: center; gap: 8px; margin-top: 7px; }
.body footer button { width: 58px; height: 16px; border: 1px solid #777; border-radius: 2px; background: linear-gradient(#f3f3f3, #d8d8d8); }
.body footer button:disabled { border-color: #bbb; background: #f2f2f2; color: #888; }
.body footer .fill { margin-right: -8px; }
.body footer .round { width: 16px; border: 0; background: none; margin-right: 2px; }
.round svg { width: 16px; height: 16px; display: block; }
.mark { position: absolute; left: 73px; top: 25px; width: 240px; height: 160px; fill: none; stroke: #e8121a; stroke-width: 3; stroke-linecap: round; pointer-events: none; }

/* dimension toolbar */
.dimrow { padding: 3px 0 7px 23px; }
.dimrow .bar { height: 19px; }
.dimrow .sep { margin-left: 2px; margin-right: 2px; }

/* command line */
.cmd { display: grid; grid-template-columns: 17px 1fr; }
.cmdside { background: linear-gradient(#777, #444); display: flex; flex-direction: column; align-items: center; justify-content: end; gap: 7px; padding-bottom: 4px; }
.cmdside svg { width: 10px; height: 10px; display: block; fill: none; }
.hist { background: #c8c8c8; padding: 1px 2px 2px; font: 10px/12px "Noto Sans CJK SC", sans-serif; height: 28px; }
.hist span { font: 9px "DejaVu Sans Mono", monospace; white-space: pre; }
.line { background: #fff; display: flex; align-items: center; gap: 3px; padding: 0 5px; height: 16px; }
.line svg { width: 11px; height: 11px; }
.line input { flex: 1; border: 0; background: none; padding-left: 4px; font-style: italic; height: 14px; }
.line input::placeholder { color: #aaa; opacity: 1; }

/* status bar */
.status { display: flex; align-items: center; height: 18px; background: linear-gradient(#a5a5a5, #7c7c7c); }
.status output { font: 8px "Liberation Mono", monospace; width: 169px; padding-left: 9px; color: #000; white-space: nowrap; }
.sg { display: flex; height: 17px; }
.sg button { width: 17px; display: grid; place-items: center; background: #b4b4b4; border: 1px solid #8c8c8c; border-width: 0 1px 0 0; }
.sg svg { width: 14px; height: 14px; }
.sg .on { background: #b9e2ef; }
.sg .tx { width: 21px; font: 9px "Noto Sans CJK SC", sans-serif; background: none; white-space: nowrap; }
.sg + .sg { margin-left: 12px; }
.r2 button { width: 18px; }
.sg .scalebtn { width: 42px; display: flex; align-items: center; gap: 2px; font: 9px "Liberation Mono", monospace; white-space: nowrap; }
.scalebtn .tri.big { border-width: 3px; border-bottom: 0; border-top-width: 4px; width: 6px; }
.scalebtn + button, .scalebtn + button + button { width: 18px; }
.sg .iso { width: 20px; background: #ece3c0; }
.status > .tri { margin: 0 4px 0 7px; }
.sg.last { padding-right: 2px; }
.taskedge { height: 2px; background: linear-gradient(90deg, #3c86b5, #7fc0e0 30%, #3d83b3 60%, #9fd0e5); }

.brand { position: absolute; right: 55px; bottom: 20px; width: 180px; height: 85px; background: #222f56; color: #c6ccdd; display: flex; align-items: center; gap: 11px; padding-left: 14px; }
.brand svg { width: 36px; height: 38px; fill: none; stroke: #c6ccdd; stroke-width: 2.4; stroke-linecap: round; }
.brand strong { display: block; font: bold 26px/28px "Noto Sans CJK SC", sans-serif; white-space: nowrap; }
.brand span { display: block; font: 12px/14px "DejaVu Sans", sans-serif; margin-top: 5px; }
```
